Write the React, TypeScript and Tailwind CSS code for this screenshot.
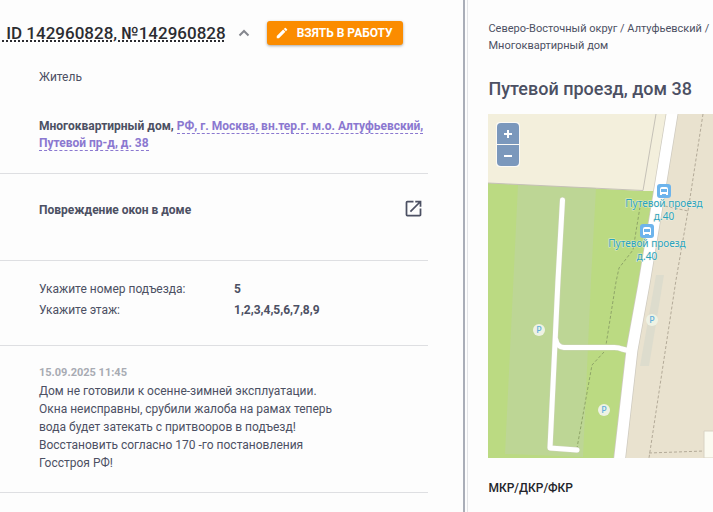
import type { ReactNode } from 'react';

const answers = [
  { label: 'Укажите номер подъезда:', value: '5' },
  { label: 'Укажите этаж:', value: '1,2,3,4,5,6,7,8,9' },
];

const description = [
  'Дом не готовили к осенне-зимней эксплуатации.',
  'Окна неисправны, срубили жалоба на рамах теперь',
  'вода будет затекать с притвооров в подъезд!',
  'Восстановить согласно 170 -го постановления',
  'Госстроя РФ!',
];

const parkings = [
  { x: 51, y: 216 },
  { x: 164, y: 206 },
  { x: 116, y: 296 },
];

const stops = [
  { x: 176, y: 77 },
  { x: 159, y: 117 },
];

function Section({ className, children }: { className: string; children: ReactNode }) {
  return <section className={`border-b border-[#dedfe2] pl-[39px] ${className}`}>{children}</section>;
}

function MapView() {
  return (
    <div className="relative h-[344px] overflow-hidden bg-[#e9e2cf]">
      <svg
        className="block h-full w-full"
        viewBox="0 0 225 344"
        preserveAspectRatio="xMinYMin slice"
        role="img"
        aria-label="Карта"
      >
        {/* Areas */}
        <rect width="225" height="344" fill="#e9e2cf" />
        <path d="M0 0H184L170 86L164 78L0 69Z" fill="#f3efdc" />
        <path d="M0 69L156 77H170L156 170L144 236L131 344H0Z" fill="#bbda82" />
        <path d="M30 71L108 74L103 166L95 343L17 340Z" fill="#bdd695" />
        <path d="M168 161H176L161 252H152Z" fill="#dddccd" />
        <path d="M0 69L155 76.500L168 0" fill="none" stroke="#c5c1b7" strokeWidth="1" />
        <path d="M216 344V317H226V344Z" fill="#fbfbf1" stroke="#d8d3c3" strokeWidth="1" />

        {/* Footpaths */}
        <g fill="none" strokeWidth="1" strokeDasharray="3 2">
          <path d="M215 0L200 97L188 166L161 344M172 91L200 97M161 339L216 337" stroke="#b3aa98" />
          <path d="M152 93L145 136L131 154L128 168L118 231M116 238L104 251L89 334" stroke="#8fa568" />
        </g>

        {/* Roads */}
        <g fill="none" strokeLinecap="round" strokeLinejoin="round">
          <path d="M185 -6L170 86L156 170L144 236L131 350" stroke="#cfcbc0" strokeWidth="12.500" />
          <path d="M74.500 86L70 166L62 334L89 336" stroke="#cbd3b5" strokeWidth="6" />
          <path d="M68 226Q69 233 76 233.500H124Q130 233 134 235L142 237" stroke="#cbd3b5" strokeWidth="6" />
          <path d="M185 -6L170 86L156 170L144 236L131 350" stroke="#ffffff" strokeWidth="11" />
          <path d="M74.500 86L70 166L62 334L89 336" stroke="#ffffff" strokeWidth="5" />
          <path d="M68 226Q69 233 76 233.500H124Q130 233 134 235L142 237" stroke="#ffffff" strokeWidth="5" />
        </g>

        {parkings.map((p) => (
          <g key={`${p.x}-${p.y}`}>
            <circle cx={p.x} cy={p.y} r="6" fill="#eef2e4" />
            <text
              x={p.x}
              y={p.y + 3}
              textAnchor="middle"
              className="fill-[#62afdc] font-['Noto_Sans',sans-serif] text-[9px] font-medium"
            >
              P
            </text>
          </g>
        ))}

        {stops.map((s) => (
          <g key={`${s.x}-${s.y}`}>
            <rect x={s.x - 7} y={s.y - 7} width="14" height="14" rx="3" fill="#6db4ec" />
            <path
              d={`M${s.x - 4} ${s.y + 4}v-6q0 -2 2 -2h4q2 0 2 2v6h-2v-1h-4v1z`}
              fill="#ffffff"
            />
            <path d={`M${s.x - 3} ${s.y - 2}h6v3h-6z`} fill="#6db4ec" />
            <text
              textAnchor="middle"
              paintOrder="stroke"
              stroke="#f4f3e6"
              strokeOpacity="0.7"
              strokeWidth="1"
              className="fill-[#2ba3bd] font-['Noto_Sans',sans-serif] text-[10px]"
            >
              <tspan x={s.x} y={s.y + 16}>Путевой проезд</tspan>
              <tspan x={s.x} y={s.y + 29}>д.40</tspan>
            </text>
          </g>
        ))}
      </svg>

      {/* Zoom controls lie over the map */}
      <div className="absolute left-2 top-2 flex flex-col gap-px rounded-sm bg-white/70 p-px">
        <button
          type="button"
          aria-label="Приблизить"
          className="flex h-[21px] w-[22px] items-center justify-center rounded-t-sm bg-[#7b98bc] text-white"
        >
          <svg viewBox="0 0 10 10" className="size-[10px]" stroke="currentColor" strokeWidth="2">
            <path d="M1 5H9M5 1V9" />
          </svg>
        </button>
        <button
          type="button"
          aria-label="Отдалить"
          className="flex h-[21px] w-[22px] items-center justify-center rounded-b-sm bg-[#7b98bc] text-white"
        >
          <svg viewBox="0 0 10 10" className="size-[10px]" stroke="currentColor" strokeWidth="2">
            <path d="M1 5H9" />
          </svg>
        </button>
      </div>
    </div>
  );
}

export default function App() {
  return (
    <div className="flex min-h-screen overflow-hidden bg-[#fdfdfd] font-[Roboto,sans-serif] text-[12px] leading-[18px] text-[#4c5063]">
      <main className="w-[65%] shrink-0 pr-[35px]">
        <header className="flex items-center pt-[21px]">
          <h1 className="whitespace-pre pl-[2px] text-[17px] font-medium leading-6 text-[#2b2c31] underline decoration-dotted decoration-2 underline-offset-1">
            {' ID 142960828, №142960828'}
          </h1>
          <button type="button" aria-label="Свернуть" className="ml-3 text-[#85878e]">
            <svg viewBox="0 0 12 12" className="size-3" fill="none" stroke="currentColor" strokeWidth="2">
              <path d="M1.500 8.500L6 4L10.500 8.500" />
            </svg>
          </button>
          <button
            type="button"
            className="ml-[17px] flex h-6 w-[136px] shrink-0 items-center gap-2 rounded-[3px] bg-[#fb8c00] pl-2 text-[12px] font-bold text-white shadow-[0_1px_3px_rgba(0,0,0,0.35)]"
          >
            <svg viewBox="0 0 24 24" className="size-[14px]" fill="currentColor">
              <path d="M3 17.250V21h3.750L17.810 9.940l-3.750-3.750L3 17.250zM20.710 7.040a1 1 0 0 0 0-1.410l-2.340-2.340a1 1 0 0 0-1.410 0l-1.830 1.830 3.750 3.750 1.830-1.830z" />
            </svg>
            <span className="whitespace-nowrap">ВЗЯТЬ В РАБОТУ</span>
          </button>
        </header>

        <Section className="pb-[21px] pt-[23px]">
          <p>Житель</p>
          <address className="mt-8 font-bold not-italic leading-[17px]">
            Многоквартирный дом,{' '}
            <a href="#house" className="text-[#8b78d0]">
              <span className="border-b border-dashed border-[#8b78d0]">
                РФ, г. Москва, вн.тер.г. м.о. Алтуфьевский,
              </span>{' '}
              <span className="border-b border-dashed border-[#8b78d0]">Путевой пр-д, д. 38</span>
            </a>
          </address>
        </Section>

        <Section className="flex items-start justify-between pb-[41px] pr-[4px] pt-[24px]">
          <h2 className="pt-[3px] font-bold">Повреждение окон в доме</h2>
          <a href="#request" aria-label="Открыть в новом окне">
            <svg viewBox="0 0 24 24" className="size-[21px]" fill="currentColor">
              <path d="M19 19H5V5h7V3H5a2 2 0 0 0-2 2v14a2 2 0 0 0 2 2h14c1.100 0 2-.9 2-2v-7h-2v7zM14 3v2h3.590l-9.830 9.830 1.410 1.410L19 6.410V10h2V3h-7z" />
            </svg>
          </a>
        </Section>

        <Section className="pb-[24px] pt-[18px]">
          <dl className="grid grid-cols-[195px_1fr] leading-[21px]">
            {answers.map((a) => (
              <div key={a.label} className="contents">
                <dt>{a.label}</dt>
                <dd className="font-bold">{a.value}</dd>
              </div>
            ))}
          </dl>
        </Section>

        <Section className="pb-5 pt-[18px]">
          <time className="block text-[11px] font-bold text-[#a8abb3]">15.09.2025 11:45</time>
          {description.map((line) => (
            <p key={line}>{line}</p>
          ))}
        </Section>
      </main>

      <aside className="flex min-w-0 flex-1 border-l-2 border-[#aaaeb8]">
        <div className="ml-[2px] min-w-0 flex-1 border-l border-[#e3e4e7] pl-5 pt-5">
          <nav className="text-[11px] leading-[17px]">
            Северо-Восточный округ / Алтуфьевский / Многоквартирный дом
          </nav>
          <h2 className="mb-[13px] mt-[23px] text-[18px] font-medium leading-6">Путевой проезд, дом 38</h2>
          <MapView />
          <h3 className="mt-[21px] font-medium text-[#24252b]">МКР/ДКР/ФКР</h3>
        </div>
      </aside>
    </div>
  );
}
